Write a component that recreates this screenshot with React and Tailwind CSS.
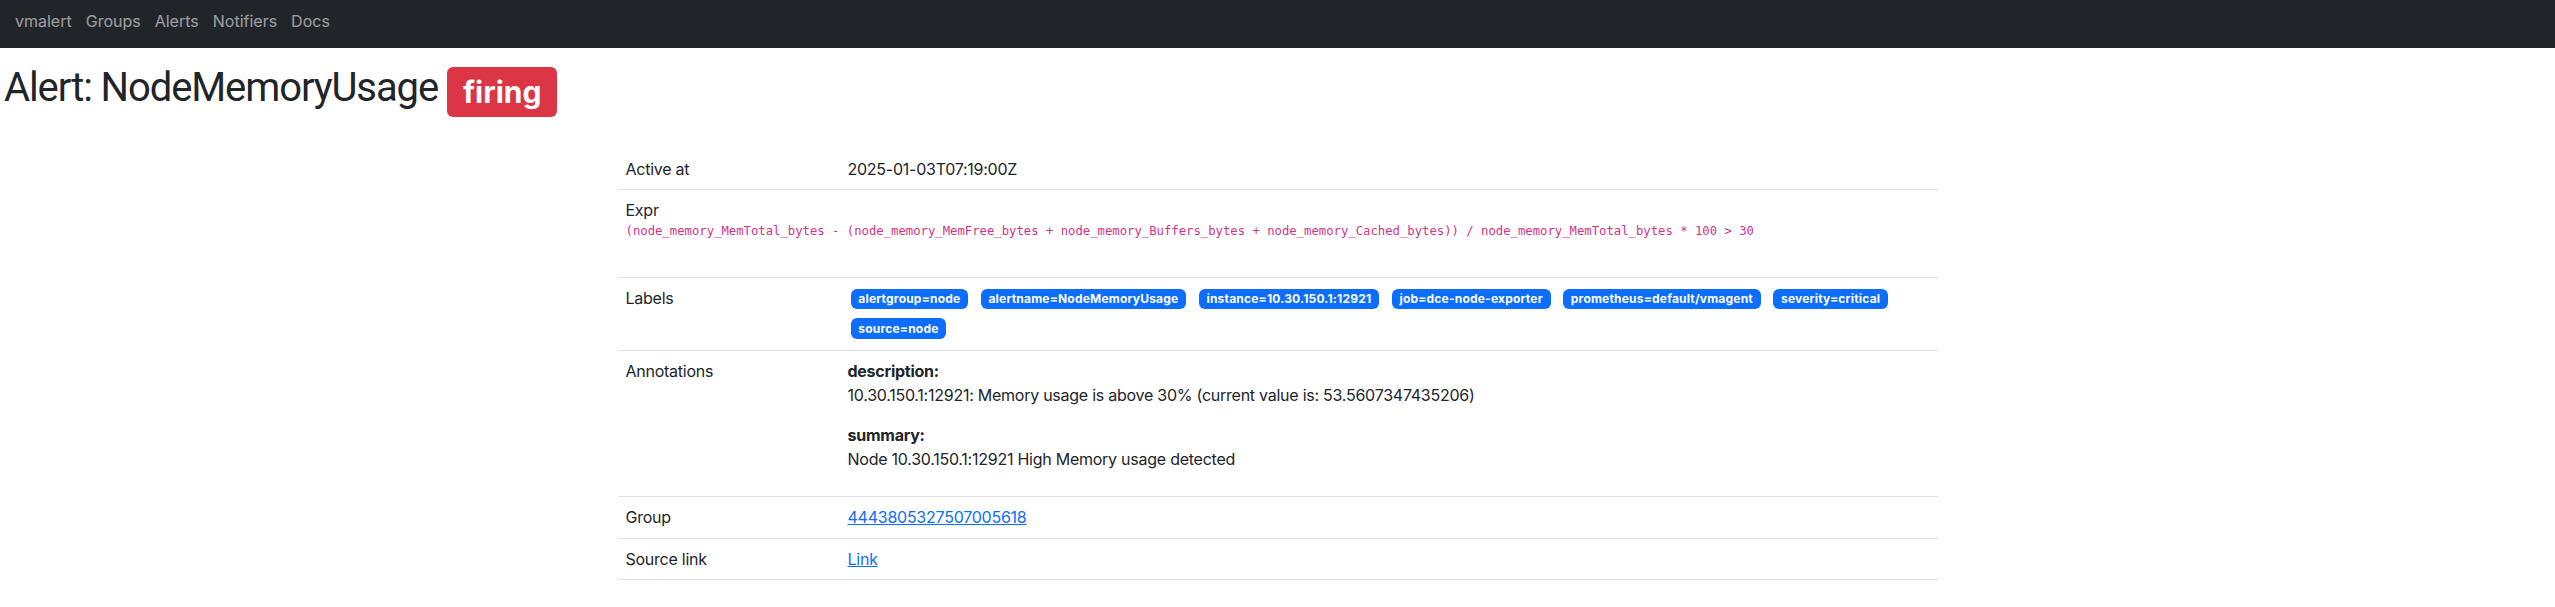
export default function App() {
  const navItems = ["vmalert", "Groups", "Alerts", "Notifiers", "Docs"];
  const labels = [
    "alertgroup=node",
    "alertname=NodeMemoryUsage",
    "instance=10.30.150.1:12921",
    "job=dce-node-exporter",
    "prometheus=default/vmagent",
    "severity=critical",
    "source=node",
  ];
  const expr =
    "(node_memory_MemTotal_bytes - (node_memory_MemFree_bytes + node_memory_Buffers_bytes + node_memory_Cached_bytes)) / node_memory_MemTotal_bytes * 100 > 30";

  return (
    <div className="min-h-screen bg-white text-[#212529] font-['Inter',sans-serif] text-[16px] leading-[24px] tracking-[-0.25px]">
      <nav className="h-12 bg-[#212529] flex items-start pt-[9px] px-2">
        {navItems.map((n) => (
          <a key={n} href="#" className="px-[7px] text-white/55 leading-[24px] tracking-normal">
            {n}
          </a>
        ))}
      </nav>

      <h1 className="mt-4 pl-[4px] font-['Roboto',sans-serif] text-[40px] leading-[48px] font-normal tracking-[-1.1px]">
        Alert: NodeMemoryUsage{" "}
        <span className="inline-block align-baseline relative top-[2px] bg-[#dc3545] text-white font-['Inter',sans-serif] font-bold text-[30px] leading-[30px] tracking-normal px-[16px] py-[10px] rounded-[6px]">
          firing
        </span>
      </h1>

      <table className="w-[1320px] mx-auto mt-[34px] border-collapse">
        <tbody>
          <tr className="border-b border-[#dee2e6]">
            <td className="w-[222px] p-2 align-top">Active at</td>
            <td className="p-2 align-top">2025-01-03T07:19:00Z</td>
          </tr>
          <tr className="border-b border-[#dee2e6]">
            <td colSpan={2} className="p-2 align-top">
              <div>Expr</div>
              <div className="font-['DejaVu_Sans_Mono',monospace] text-[12.25px] leading-[18px] tracking-normal text-[#d63384] mb-[29px] whitespace-pre">
                {expr}
              </div>
            </td>
          </tr>
          <tr className="border-b border-[#dee2e6]">
            <td className="w-[222px] p-2 align-top">Labels</td>
            <td className="p-2 align-top">
              <div className="flex flex-wrap gap-x-[12.5px] gap-y-[9px] py-[3px] pl-[3px]">
                {labels.map((l) => (
                  <span
                    key={l}
                    className="inline-block bg-[#0d6efd] text-white text-[12px] font-bold leading-[12px] tracking-[0.2px] px-[7.8px] py-[4.2px] rounded-[6px]"
                  >
                    {l}
                  </span>
                ))}
              </div>
            </td>
          </tr>
          <tr className="border-b border-[#dee2e6]">
            <td className="w-[222px] p-2 align-top">Annotations</td>
            <td className="p-2 pb-[9px] align-top">
              <div className="mb-4">
                <div className="font-bold">description:</div>
                <div>10.30.150.1:12921: Memory usage is above 30% (current value is: 53.5607347435206)</div>
              </div>
              <div className="mb-4">
                <div className="font-bold">summary:</div>
                <div>Node 10.30.150.1:12921 High Memory usage detected</div>
              </div>
            </td>
          </tr>
          <tr className="border-b border-[#dee2e6]">
            <td className="w-[222px] p-2 pb-[9px] align-top">Group</td>
            <td className="p-2 pb-[9px] align-top">
              <a href="#" className="text-[#0d6efd] underline">4443805327507005618</a>
            </td>
          </tr>
          <tr className="border-b border-[#dee2e6]">
            <td className="w-[222px] p-2 align-top">Source link</td>
            <td className="p-2 align-top">
              <a href="#" className="text-[#0d6efd] underline">Link</a>
            </td>
          </tr>
        </tbody>
      </table>
    </div>
  );
}
